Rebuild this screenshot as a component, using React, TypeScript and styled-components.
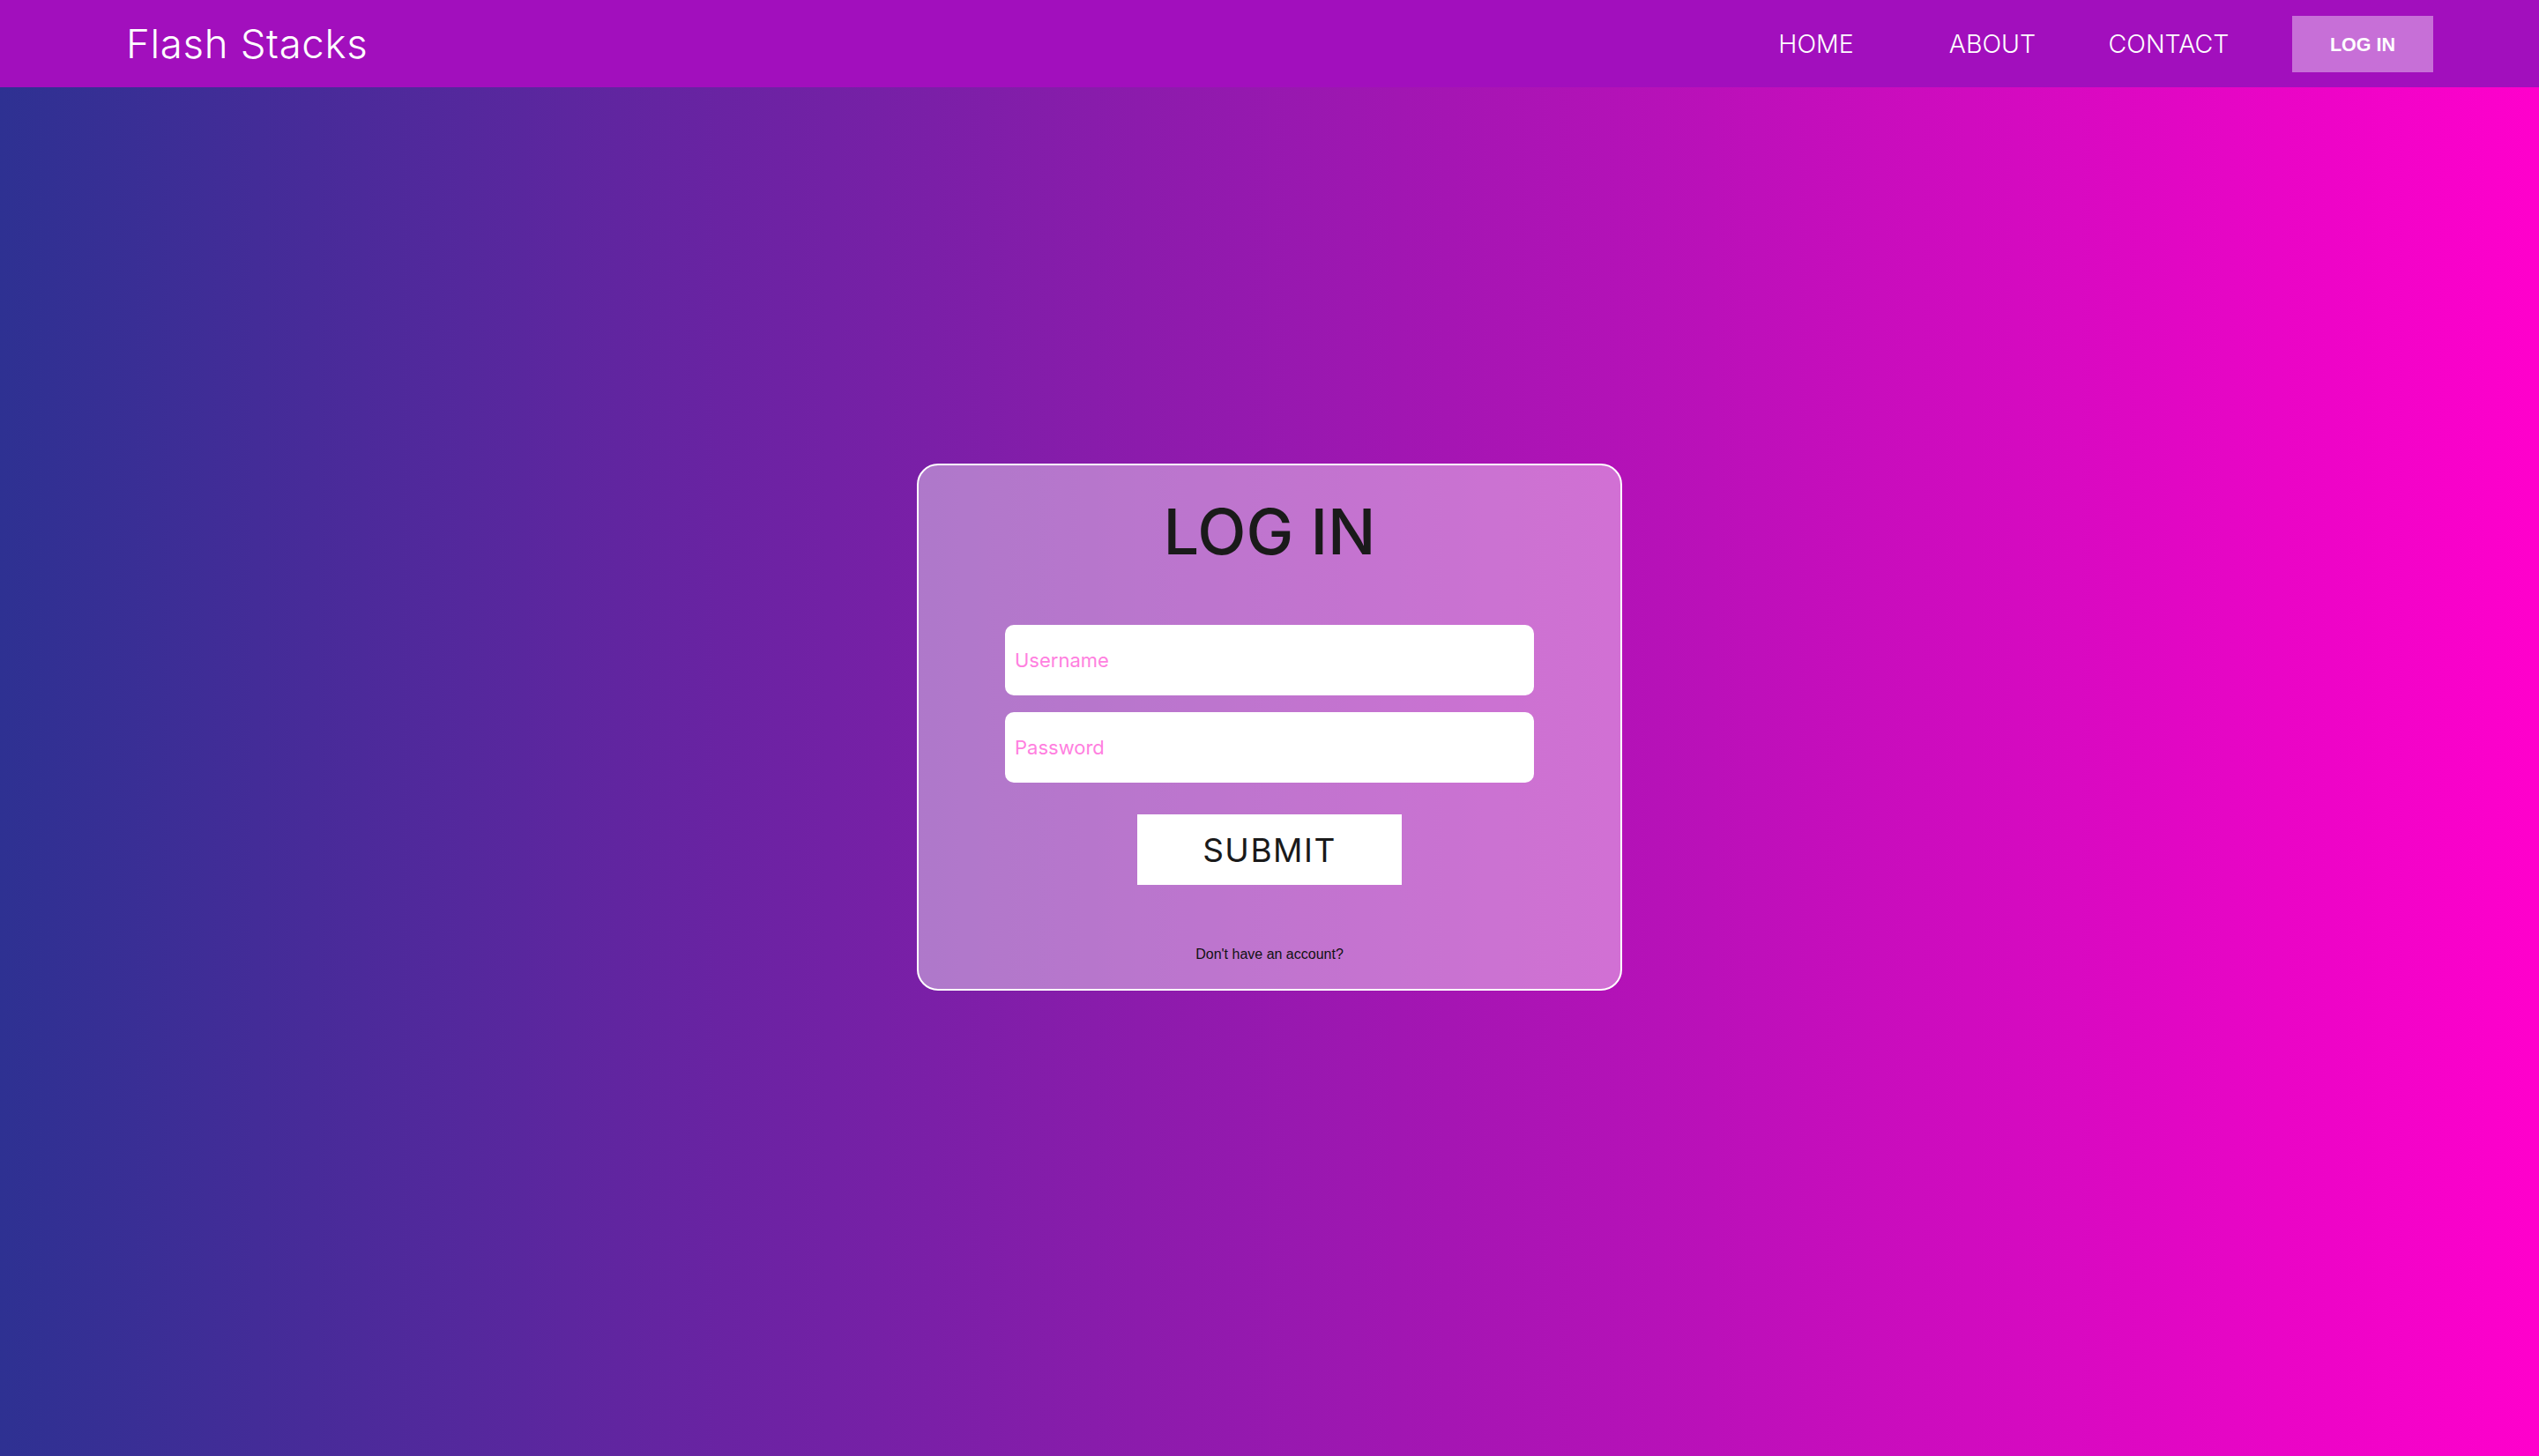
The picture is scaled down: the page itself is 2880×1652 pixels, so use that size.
import React from "react";
import styled, { createGlobalStyle } from "styled-components";

const GlobalStyle = createGlobalStyle`
  html, body {
    margin: 0;
    padding: 0;
  }
  body {
    min-height: 100vh;
    background: linear-gradient(to right, #2e3192 0%, #ff00cc 100%);
    font-family: Inter, "Liberation Sans", sans-serif;
  }
  * { box-sizing: border-box; }
`;

const Page = styled.div`
  min-height: 100vh;
  display: flex;
  flex-direction: column;
`;

const NavBar = styled.header`
  height: 99px;
  flex: 0 0 auto;
  display: flex;
  align-items: center;
  padding: 0 120px 0 143px;
  background: #a20fbd;
`;

const Logo = styled.div`
  flex: 1;
  font-family: Inter, "Liberation Sans", sans-serif;
  font-weight: 300;
  font-size: 45.5px;
  letter-spacing: 0.7px;
  color: #ffffff;
  line-height: 1;
`;

const NavLinks = styled.nav`
  display: grid;
  grid-template-columns: repeat(3, 200px);
  align-items: center;
  padding-top: 1px;
`;

const NavLink = styled.a`
  text-align: center;
  font-family: Inter, "Liberation Sans", sans-serif;
  font-weight: 300;
  font-size: 28.5px;
  color: #ffffff;
  text-decoration: none;
  line-height: 1;
  cursor: pointer;
`;

const NavButton = styled.button`
  margin-left: 40px;
  width: 160px;
  height: 64px;
  padding: 3px 0 0;
  border: none;
  background: rgba(255, 255, 255, 0.4);
  color: #ffffff;
  font-family: "Liberation Sans", Arial, sans-serif;
  font-weight: 700;
  font-size: 21.5px;
  cursor: pointer;
`;

const Main = styled.main`
  flex: 1;
  display: flex;
  justify-content: center;
  align-items: center;
  padding-bottom: 101px;
`;

const Card = styled.form`
  width: 800px;
  height: 598px;
  border: 2px solid #ffffff;
  border-radius: 24px;
  background: rgba(255, 255, 255, 0.4);
  display: flex;
  flex-direction: column;
  align-items: center;
  padding: 39px 0 0;
`;

const Title = styled.h1`
  margin: 0 0 70px;
  font-family: Inter, "Liberation Sans", sans-serif;
  font-weight: 500;
  font-size: 72px;
  line-height: 1;
  color: #1a1a1a;
`;

const Field = styled.input<{ $gap: number }>`
  width: 600px;
  height: 80px;
  border: none;
  border-radius: 10px;
  background: #ffffff;
  padding: 0 11px;
  margin-bottom: ${(p) => p.$gap}px;
  font-family: Inter, "Liberation Sans", sans-serif;
  font-size: 22px;
  color: #333;
  outline: none;
  &::placeholder {
    color: #ff80e0;
    opacity: 1;
  }
`;

const SubmitButton = styled.button`
  width: 300px;
  height: 80px;
  border: none;
  background: #ffffff;
  font-family: Inter, "Liberation Sans", sans-serif;
  font-weight: 400;
  font-size: 37px;
  letter-spacing: 1.5px;
  color: #1a1a1a;
  cursor: pointer;
`;

const Footnote = styled.p`
  margin: 70px 0 0;
  font-family: "Liberation Sans", Arial, sans-serif;
  font-size: 16px;
  line-height: 18px;
  color: #111111;
`;

export default function App() {
  return (
    <>
      <GlobalStyle />
      <Page>
        <NavBar>
          <Logo>Flash Stacks</Logo>
          <NavLinks>
            <NavLink>HOME</NavLink>
            <NavLink>ABOUT</NavLink>
            <NavLink>CONTACT</NavLink>
          </NavLinks>
          <NavButton type="button">LOG IN</NavButton>
        </NavBar>
        <Main>
          <Card onSubmit={(e) => e.preventDefault()}>
            <Title>LOG IN</Title>
            <Field $gap={19} type="text" placeholder="Username" />
            <Field $gap={36} type="password" placeholder="Password" />
            <SubmitButton type="submit">SUBMIT</SubmitButton>
            <Footnote>Don't have an account?</Footnote>
          </Card>
        </Main>
      </Page>
    </>
  );
}
